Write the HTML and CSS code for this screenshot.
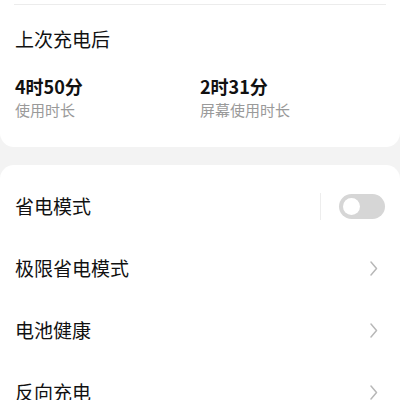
FILE: index.html
```html
<!DOCTYPE html>
<html lang="zh-CN">
<head>
<meta charset="utf-8">
<link rel="stylesheet" href="styles.css">
</head>
<body>
<div class="page">
  <section class="card card-top">
    <div class="rule"></div>
    <h2 class="title">上次充电后</h2>
    <div class="stats">
      <div class="stat">
        <div class="value">4时50分</div>
        <div class="label">使用时长</div>
      </div>
      <div class="stat">
        <div class="value">2时31分</div>
        <div class="label">屏幕使用时长</div>
      </div>
    </div>
  </section>
  <section class="card card-list">
    <div class="row">
      <span class="row-text">省电模式</span>
      <span class="row-end">
        <span class="vsep"></span>
        <span class="toggle"><span class="knob"></span></span>
      </span>
    </div>
    <div class="row">
      <span class="row-text">极限省电模式</span>
      <svg class="chev" width="8" height="15" viewBox="0 0 8 15"><path d="M1 1 L6.5 7.5 L1 14" fill="none" stroke="#b8b8b8" stroke-width="1.5" stroke-linecap="round" stroke-linejoin="round"/></svg>
    </div>
    <div class="row">
      <span class="row-text">电池健康</span>
      <svg class="chev" width="8" height="15" viewBox="0 0 8 15"><path d="M1 1 L6.5 7.5 L1 14" fill="none" stroke="#b8b8b8" stroke-width="1.5" stroke-linecap="round" stroke-linejoin="round"/></svg>
    </div>
    <div class="row">
      <span class="row-text">反向充电</span>
      <svg class="chev" width="8" height="15" viewBox="0 0 8 15"><path d="M1 1 L6.5 7.5 L1 14" fill="none" stroke="#b8b8b8" stroke-width="1.5" stroke-linecap="round" stroke-linejoin="round"/></svg>
    </div>
  </section>
</div>
</body>
</html>
```
FILE: styles.css
```css
html, body {
  margin: 0;
  padding: 0;
}
body {
  background: #f3f3f3;
  font-family: "Noto Sans CJK SC", "Noto Sans", sans-serif;
  color: #111;
  overflow: hidden;
}
.page {
  width: 400px;
  height: 400px;
  overflow: hidden;
}
.card {
  background: #fff;
}
.card-top {
  border-radius: 0 0 14px 14px;
  padding: 4px 15px 26px;
}
.rule {
  height: 1px;
  background: #ececec;
  margin: 0 -1px;
}
.title {
  margin: 21px 0 0;
  font-size: 19px;
  font-weight: 400;
  line-height: 26px;
  color: #111;
}
.stats {
  display: grid;
  grid-template-columns: 1fr 1fr;
  margin-top: 22px;
}
.value {
  font-size: 18px;
  font-weight: 700;
  line-height: 24px;
  color: #111;
}
.label {
  margin-top: 1px;
  font-size: 15px;
  line-height: 22px;
  color: #9a9a9a;
}
.card-list {
  margin-top: 18px;
  border-radius: 14px 14px 0 0;
  padding: 10px 0 0;
}
.row {
  height: 62px;
  display: flex;
  align-items: center;
  justify-content: space-between;
  padding: 0 15px;
}
.row-text {
  font-size: 19px;
  line-height: 26px;
  color: #111;
}
.row-end {
  display: flex;
  align-items: center;
}
.vsep {
  width: 1px;
  height: 27px;
  background: #ededed;
  margin-right: 18px;
}
.toggle {
  width: 46px;
  height: 25px;
  border-radius: 13px;
  background: #d6d6d6;
  display: flex;
  align-items: center;
  padding-left: 4px;
  box-sizing: border-box;
}
.knob {
  width: 17px;
  height: 17px;
  border-radius: 50%;
  background: #fff;
}
.chev {
  margin-right: 7px;
  display: block;
}
```
